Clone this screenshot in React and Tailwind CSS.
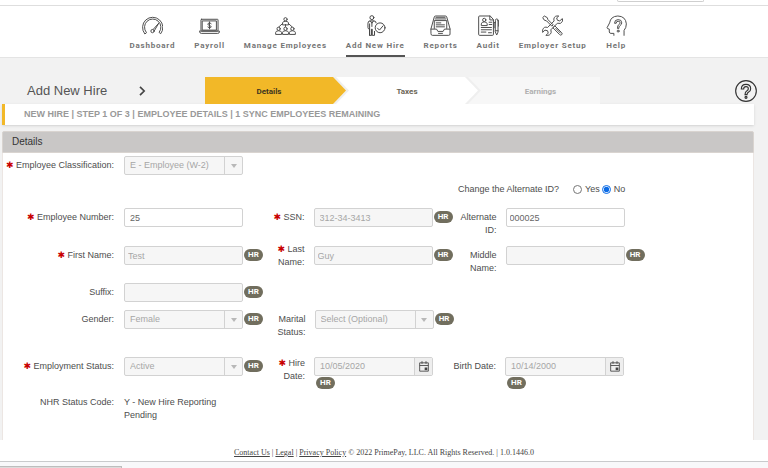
import React from "react";

function Glyph({ children, width = 3 }) {
  return (
    <svg
      viewBox="0 0 64 64"
      className="h-[21px] w-[21px]"
      fill="none"
      stroke="currentColor"
      strokeWidth={width}
      strokeLinecap="round"
      strokeLinejoin="round"
      aria-hidden="true"
    >
      {children}
    </svg>
  );
}

function GaugeIcon() {
  return (
    <Glyph>
      <path d="M8 57A31 31 0 1 1 57 57L52 53A25 25 0 1 0 13 53Z" />
      <circle cx="32" cy="49" r="5" />
      <path d="M34 44 51 25M37 49 51 25" />
    </Glyph>
  );
}

function LaptopIcon() {
  return (
    <Glyph>
      <rect x="6" y="13" width="52" height="36" rx="2" />
      <rect x="11" y="18" width="42" height="28" />
      <path d="M2 49h60v3q0 4-5 4H7q-5 0-5-4z" />
      <path d="M37 27q-1-3-5-3t-5 4q0 3 5 4t5 4q0 3-5 3t-5-3M32 21v21" />
    </Glyph>
  );
}

function Person({ x, y }) {
  return (
    <g transform={`translate(${x} ${y})`}>
      <circle cx="0" cy="0" r="5" />
      <path d="M-9 16v-5q1-5 9-5t9 5v5z" />
    </g>
  );
}

function TeamIcon() {
  return (
    <Glyph>
      <Person x={32} y={13} />
      <path d="M32 29v6M22 27 12 36M42 27 52 36" />
      <Person x={11} y={42} />
      <Person x={32} y={42} />
      <Person x={53} y={42} />
    </Glyph>
  );
}

function HireIcon() {
  return (
    <Glyph>
      <circle cx="21" cy="8" r="6" />
      <path d="M14 62V43q-5 0-5-5V25q0-7 7-7h11q7 0 7 6M14 27v35h6V43h2v19h7V50M16 18l5 7 5-7M21 25v10" />
      <circle cx="46" cy="39" r="15" />
      <path d="m38 40 6 6 11-13" />
    </Glyph>
  );
}

function TrayIcon() {
  return (
    <Glyph>
      <path d="M3 42 13 6q1-3 4-3h30q3 0 4 3l10 36v16q0 4-4 4H7q-4 0-4-4z" />
      <path d="M13 41V17h38v24M16 12h32M18 7h28" />
      <path d="M19 24h14M19 30h25M19 36h25" />
      <path d="M3 43h17l4 7h16l4-7h17M26 56h12" />
    </Glyph>
  );
}

function AuditIcon() {
  return (
    <Glyph>
      <path d="M36 3H5q-3 0-3 3v53q0 3 3 3h39q3 0 3-3V15z" />
      <path d="M36 3v12h11" />
      <circle cx="19" cy="15" r="5" />
      <path d="M10 31v-4q1-6 9-6t9 6v4zM34 22h8M34 29h8M10 38h31M10 45h31M10 52h14M32 54h9" />
      <path d="M53 16q0-4 4-4t4 4v36l-4 9-4-9zM53 23h-4v16M60 17h3v17M53 48h8" />
    </Glyph>
  );
}

function ToolsIcon() {
  return (
    <Glyph>
      <path d="M3 7 7 3l9 5 2 6 16 16-4 4-16-16-6-2z" />
      <path d="m34 38 5-5 21 21q3 3 0 6t-6 0zM42 41l14 14" />
      <path d="M50 3q-12-2-14 9 0 3 1 6L17 38q-11-4-15 7v8l7-7 8 2 2 7-7 7q13 2 16-9l-1-8 20-20q10 4 15-5 2-5 0-9l-8 7-7-2-2-6z" />
    </Glyph>
  );
}

function HeadIcon() {
  return (
    <Glyph>
      <path d="M55 62V47q7-8 7-20Q60 4 36 3 14 4 11 24L3 39q0 3 7 4v9q1 4 5 4h9v6" />
      <path d="M26 24q0-10 11-10t11 10q0 5-6 9-3 2-3 8h-4q0-9 4-12 4-2 4-5 0-5-6-5t-6 5z" />
      <circle cx="37" cy="49" r="3" />
    </Glyph>
  );
}

const NAV = [
  { label: "Dashboard", Icon: GaugeIcon },
  { label: "Payroll", Icon: LaptopIcon },
  { label: "Manage Employees", Icon: TeamIcon },
  { label: "Add New Hire", Icon: HireIcon, active: true },
  { label: "Reports", Icon: TrayIcon },
  { label: "Audit", Icon: AuditIcon },
  { label: "Employer Setup", Icon: ToolsIcon },
  { label: "Help", Icon: HeadIcon },
];

function TopBar() {
  return (
    <header className="border-b border-[#e4e4e4] bg-white">
      <div className="flex h-[6px] items-start justify-end border-b border-[#dedede] pr-16">
        <div className="h-[2px] w-[87px] rounded-b border-x border-b border-[#cfcfcf]" />
      </div>
      <nav className="flex justify-center gap-[19px] pt-[9px] pr-3" aria-label="Main">
        {NAV.map(({ label, Icon, active }) => (
          <a
            key={label}
            href="#"
            aria-current={active ? "page" : undefined}
            className={
              active
                ? "flex flex-col items-center border-b-2 border-[#555] text-[#444]"
                : "flex flex-col items-center border-b-2 border-transparent text-[#4c4c4c]"
            }
          >
            <Icon />
            <span className="pt-[5px] pb-1 font-[Roboto,sans-serif] text-[8px] leading-[10px] font-bold tracking-widest whitespace-nowrap text-[#757575]">
              {label}
            </span>
          </a>
        ))}
      </nav>
    </header>
  );
}

function StepTip({ className }) {
  return (
    <svg
      viewBox="0 0 16 26"
      preserveAspectRatio="none"
      className="absolute top-0 left-full z-10 h-full w-4"
      aria-hidden="true"
    >
      <path d="M0 0H3L16 13 3 26H0z" fill="#efefef" />
      <path d="M0 0 13 13 0 26z" className={className} />
    </svg>
  );
}

function Steps() {
  const base =
    "h-full w-full pt-[2px] font-[Roboto,sans-serif] text-[8px] leading-[10px] font-bold";
  return (
    <ol className="grid h-full max-w-[395px] flex-1 grid-cols-[128fr_132fr_135fr]">
      <li className="relative bg-[#f2b828]">
        <button type="button" aria-current="step" className={`${base} text-[#3e3520]`}>
          Details
        </button>
        <StepTip className="fill-[#f2b828]" />
      </li>
      <li className="relative bg-white">
        <button type="button" className={`${base} pl-4 text-[#6b6656]`}>
          Taxes
        </button>
        <StepTip className="fill-white" />
      </li>
      <li className="bg-[#f7f7f7]">
        <button type="button" className={`${base} pl-4 text-[#b0b0b0]`}>
          Earnings
        </button>
      </li>
    </ol>
  );
}

function HelpButton() {
  return (
    <button type="button" aria-label="Help" className="ml-auto text-[#333]">
      <svg
        viewBox="0 0 66 66"
        className="h-[22px] w-[22px]"
        fill="none"
        stroke="currentColor"
        strokeWidth="3.4"
        aria-hidden="true"
      >
        <circle cx="33" cy="33" r="31" />
        <path d="M19 27q0-14 14-14t14 13q0 7-6 10-5 3-5 8h-6q0-9 6-12 4-2 4-6 0-6-7-6t-7 7z" />
        <circle cx="33" cy="52" r="3" />
      </svg>
    </button>
  );
}

function Req() {
  return (
    <span aria-hidden="true" className="font-['DejaVu_Sans',sans-serif] text-[9px] font-bold text-[#c80000]">
      ✱
    </span>
  );
}

function HR({ below }) {
  return (
    <span
      className={`${below ? "mt-px ml-[2px]" : "mt-[3px] ml-px"} inline-block h-3 w-[19px] shrink-0 rounded-full bg-[#716e5e] text-center font-[Roboto,sans-serif] text-[8px] leading-3 font-bold text-white`}
    >
      HR
    </span>
  );
}

function Field({ id, label, required, size = "w-10", place = "pt-[3px]", plain, children }) {
  const cls = `${size} ${place} shrink-0 text-right leading-[13px]`;
  const body = (
    <>
      {required && <Req />}
      {required ? ` ${label}:` : `${label}:`}
    </>
  );
  return (
    <div className="flex items-start gap-[9px]">
      {plain ? <div className={cls}>{body}</div> : <label htmlFor={id} className={cls}>{body}</label>}
      <div className="flex items-start">{children}</div>
    </div>
  );
}

const FIRST = "w-[112px] pr-px";
const THIRD = "w-11";

function TextBox({ id, value = "", off, tight }) {
  return (
    <input
      id={id}
      type="text"
      defaultValue={value}
      disabled={off}
      className={`h-[19px] w-[119px] shrink-0 rounded-[2px] border border-[#d2d2d2] bg-white text-[#666] disabled:bg-[#f6f6f6] disabled:text-[#a6a6a6] ${tight ? "px-[3px]" : "px-[5px]"}`}
    />
  );
}

function Picker({ id, value }) {
  return (
    <div className="relative h-[19px] w-[119px] shrink-0">
      <select
        id={id}
        disabled
        className="h-full w-full appearance-none rounded-[2px] border border-[#d2d2d2] bg-[#f6f6f6] pr-5 pl-[5px] text-[#a6a6a6] opacity-100"
      >
        <option>{value}</option>
      </select>
      <span className="pointer-events-none absolute inset-y-px right-px flex w-[18px] items-center justify-center border-l border-[#d2d2d2]">
        <svg viewBox="0 0 6 4" className="h-1 w-[6px] fill-[#b8b8b8]" aria-hidden="true">
          <path d="M0 0h6L3 4z" />
        </svg>
      </span>
    </div>
  );
}

function DateBox({ id, value }) {
  return (
    <div className="flex h-[19px] w-[119px] rounded-[2px] border border-[#d2d2d2] bg-[#f6f6f6]">
      <input
        id={id}
        type="text"
        defaultValue={value}
        disabled
        className="min-w-0 flex-1 px-[5px] text-[#a6a6a6]"
      />
      <button
        type="button"
        disabled
        aria-label="Open calendar"
        className="flex w-[18px] items-center justify-center border-l border-[#d2d2d2] bg-[#eeeeee]"
      >
        <svg viewBox="0 0 30 32" className="h-[11px] w-[10px]" fill="none" stroke="#444" strokeWidth="2.6" aria-hidden="true">
          <path d="M2 5h26v25H2zM2 13h26M9 0v8M21 0v8" />
          <path d="M17 19h8v8h-8z" fill="#444" stroke="none" />
        </svg>
      </button>
    </div>
  );
}

function Row({ className = "", children }) {
  return <div className={`grid grid-cols-[262fr_187fr_301fr] ${className}`}>{children}</div>;
}

function DetailsForm() {
  return (
    <form className="border-x border-[#ece6e3] bg-white pt-[3px] pb-[18px]">
      <Row>
        <Field id="classification" label="Employee Classification" required size={FIRST}>
          <Picker id="classification" value="E - Employee (W-2)" />
        </Field>
      </Row>
      <Row className="mt-2">
        <fieldset className="col-start-3 flex items-center leading-[13px]">
          <legend className="float-left pl-[6px]">Change the Alternate ID?</legend>
          <label className="ml-[14px] flex items-center gap-[3px]">
            <input type="radio" name="change-id" className="h-[9px] w-[9px] accent-[#0b6be6]" />
            Yes
          </label>
          <label className="ml-[2px] flex items-center gap-[3px]">
            <input type="radio" name="change-id" defaultChecked className="h-[9px] w-[9px] accent-[#0b6be6]" />
            No
          </label>
        </fieldset>
      </Row>
      <Row className="mt-3">
        <Field id="number" label="Employee Number" required size={FIRST}>
          <TextBox id="number" value="25" />
        </Field>
        <Field id="ssn" label="SSN" required>
          <TextBox id="ssn" value="312-34-3413" off />
          <HR />
        </Field>
        <Field id="alternate" label="Alternate ID" size={THIRD}>
          <TextBox id="alternate" value="000025" tight />
        </Field>
      </Row>
      <Row className="mt-[9px]">
        <Field id="first" label="First Name" required size={FIRST}>
          <TextBox id="first" value="Test" off tight />
          <HR />
        </Field>
        <Field id="last" label="Last Name" required place="-mt-[3px]">
          <TextBox id="last" value="Guy" off tight />
          <HR />
        </Field>
        <Field id="middle" label="Middle Name" size={THIRD}>
          <TextBox id="middle" off tight />
          <HR />
        </Field>
      </Row>
      <Row className="mt-2">
        <Field id="suffix" label="Suffix" size={FIRST}>
          <TextBox id="suffix" off />
          <HR />
        </Field>
      </Row>
      <Row className="mt-2">
        <Field id="gender" label="Gender" size={FIRST}>
          <Picker id="gender" value="Female" />
          <HR />
        </Field>
        <Field id="marital" label="Marital Status" size="w-[42px]">
          <Picker id="marital" value="Select (Optional)" />
          <HR />
        </Field>
      </Row>
      <Row className="mt-[18px]">
        <Field id="status" label="Employment Status" required size={FIRST}>
          <Picker id="status" value="Active" />
          <HR />
        </Field>
        <Field id="hired" label="Hire Date" required place="pt-0">
          <div className="flex flex-col items-start">
            <DateBox id="hired" value="10/05/2020" />
            <HR below />
          </div>
        </Field>
        <Field id="born" label="Birth Date" size={THIRD}>
          <div className="flex flex-col items-start">
            <DateBox id="born" value="10/14/2000" />
            <HR below />
          </div>
        </Field>
      </Row>
      <Row className="mt-1">
        <Field label="NHR Status Code" size={FIRST} plain>
          <p className="max-w-[119px] pt-[3px] leading-[13px]">Y - New Hire Reporting Pending</p>
        </Field>
      </Row>
    </form>
  );
}

function Footer() {
  return (
    <footer className="border-b border-[#c9cacc] bg-white pt-[7px] pb-[3px] text-center font-['Liberation_Serif',serif] text-[8px] leading-[11px] text-[#444]">
      <a href="#" className="underline">Contact Us</a> | <a href="#" className="underline">Legal</a> |{" "}
      <a href="#" className="underline">Privacy Policy</a> © 2022 PrimePay, LLC. All Rights Reserved. | 1.0.1446.0
    </footer>
  );
}

export default function App() {
  return (
    <div className="flex min-h-screen flex-col bg-[#f8f8fa] font-['Liberation_Sans',Arial,sans-serif] text-[9px] text-[#4d4d4d]">
      <TopBar />
      <main className="bg-[#f2f2f2] pt-[19px] pr-[14px] pl-[2px]">
        <div className="-mr-[3px] flex h-[27px] items-center">
          <h1 className="flex w-[203px] items-center pl-[25px] text-[13px] leading-4 text-[#555]">
            Add New Hire
            <svg viewBox="0 0 8 12" className="ml-8 h-[10px] w-[7px]" fill="none" stroke="#444" strokeWidth="2" aria-hidden="true">
              <path d="M1 1l5 5-5 5" />
            </svg>
          </h1>
          <Steps />
          <HelpButton />
        </div>
        <h2 className="border-l-[3px] border-[#f2b828] bg-white pl-[19px] text-[9px] leading-[21px] font-bold text-[#999] shadow-sm">
          NEW HIRE | STEP 1 OF 3 | EMPLOYEE DETAILS | 1 SYNC EMPLOYEES REMAINING
        </h2>
        <section className="mt-[6px]">
          <h2 className="rounded-t-[2px] border border-[#d9d4d0] bg-[#c9c7c6] pl-[9px] text-[10px] leading-5 text-[#333]">
            Details
          </h2>
          <DetailsForm />
        </section>
      </main>
      <Footer />
      <div className="mt-auto h-[2px] w-[122px] border-t border-r border-[#bdbdbd] bg-[#dcdcdc]" />
    </div>
  );
}
